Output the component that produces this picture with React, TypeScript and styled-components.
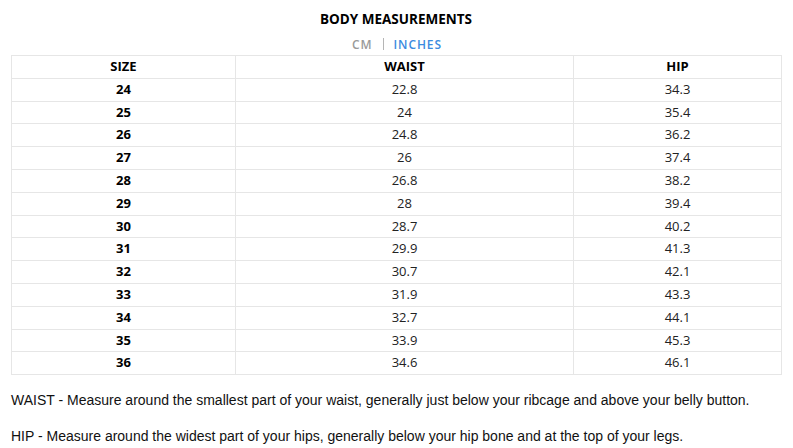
import React from 'react';
import styled, { createGlobalStyle } from 'styled-components';

const GlobalStyle = createGlobalStyle`
  body {
    margin: 0;
    background: #ffffff;
    color: #000000;
    font-family: "Open Sans", "Liberation Sans", Arial, sans-serif;
  }
`;

const Page = styled.div`
  padding: 10px 12px 0 11px;
`;

const Title = styled.h2`
  margin: 0;
  text-align: center;
  font-size: 13.5px;
  font-weight: 700;
  line-height: 18px;
  color: #000;
`;

const UnitSwitch = styled.div`
  display: flex;
  justify-content: center;
  align-items: center;
  gap: 10px;
  margin-top: 7px;
  height: 18px;
  padding-left: 2px;
`;

const Unit = styled.span<{ $active?: boolean }>`
  font-size: 12px;
  font-weight: 600;
  letter-spacing: 0.9px;
  color: ${(p) => (p.$active ? '#3b8be0' : '#9a9a9a')};
`;

const Divider = styled.span`
  width: 1px;
  height: 12px;
  background: #b5b5b5;
`;

const Table = styled.table`
  width: 100%;
  margin-top: 2px;
  border-collapse: collapse;
  table-layout: fixed;
`;

const Th = styled.th`
  border: 1px solid #e6e6e6;
  padding: 2px 4px;
  font-size: 13px;
  line-height: 17.8px;
  font-weight: 700;
  text-align: center;
`;

const Td = styled.td<{ $bold?: boolean }>`
  border: 1px solid #e6e6e6;
  padding: 2px 4px;
  font-size: 13px;
  line-height: 17.8px;
  font-weight: ${(p) => (p.$bold ? 700 : 400)};
  color: ${(p) => (p.$bold ? '#000' : '#222')};
  text-align: center;
`;

const Note = styled.p`
  margin: 15px 0 0;
  font-family: "Liberation Sans", Arial, sans-serif;
  font-size: 14px;
  line-height: 21px;
  color: #111;
`;

const Notes = styled.div`
  margin-top: 0;
`;

const rows: [number, string, string][] = [
  [24, '22.8', '34.3'],
  [25, '24', '35.4'],
  [26, '24.8', '36.2'],
  [27, '26', '37.4'],
  [28, '26.8', '38.2'],
  [29, '28', '39.4'],
  [30, '28.7', '40.2'],
  [31, '29.9', '41.3'],
  [32, '30.7', '42.1'],
  [33, '31.9', '43.3'],
  [34, '32.7', '44.1'],
  [35, '33.9', '45.3'],
  [36, '34.6', '46.1'],
];

export default function App() {
  return (
    <Page>
      <GlobalStyle />
      <Title>BODY MEASUREMENTS</Title>
      <UnitSwitch>
        <Unit>CM</Unit>
        <Divider />
        <Unit $active>INCHES</Unit>
      </UnitSwitch>
      <Table>
        <colgroup>
          <col style={{ width: 224 }} />
          <col style={{ width: 338 }} />
          <col style={{ width: 208 }} />
        </colgroup>
        <thead>
          <tr>
            <Th>SIZE</Th>
            <Th>WAIST</Th>
            <Th>HIP</Th>
          </tr>
        </thead>
        <tbody>
          {rows.map(([size, waist, hip]) => (
            <tr key={size}>
              <Td $bold>{size}</Td>
              <Td>{waist}</Td>
              <Td>{hip}</Td>
            </tr>
          ))}
        </tbody>
      </Table>
      <Notes>
        <Note>
          WAIST - Measure around the smallest part of your waist, generally just below your ribcage and above your belly button.
        </Note>
        <Note>
          HIP - Measure around the widest part of your hips, generally below your hip bone and at the top of your legs.
        </Note>
      </Notes>
    </Page>
  );
}
